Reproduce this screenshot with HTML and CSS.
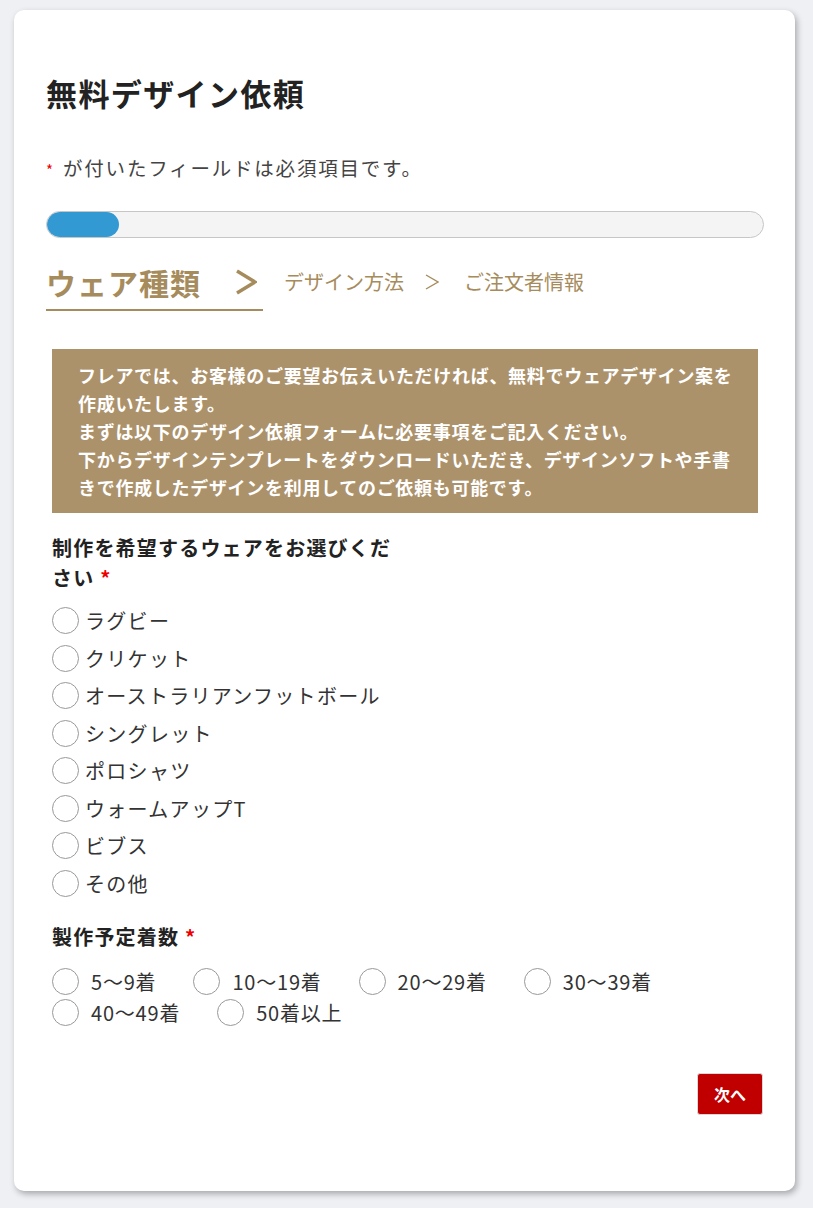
FILE: index.html
```html
<!DOCTYPE html>
<html lang="ja">
<head>
    <meta charset="UTF-8">
    <meta name="viewport" content="width=device-width, initial-scale=1.0">
    <title>無料デザイン依頼</title>
    <link rel="stylesheet" href="styles.css">
</head>
<body>
    <div class="card">
        <h1 class="title">無料デザイン依頼</h1>
        <p class="note"><span class="req">*</span> が付いたフィールドは必須項目です。</p>

        <div class="progress"><div class="bar" style="width:72px"></div></div>

        <div class="steps">
            <div class="step active">ウェア種類
                <svg class="arrow" width="22" height="26" viewBox="0 0 22 26"><polyline points="2,2 20,13 2,24" fill="none" stroke="currentColor" stroke-width="3.4"/></svg>
            </div>
            <div class="step">デザイン方法</div>
            <svg class="sep" width="14" height="16" viewBox="0 0 14 16"><polyline points="1,1 13,8 1,15" fill="none" stroke="currentColor" stroke-width="1.4"/></svg>
            <div class="step">ご注文者情報</div>
        </div>

        <form class="form">
            <div class="intro">
                フレアでは、お客様のご要望お伝えいただければ、無料でウェアデザイン案を<br>作成いたします。<br>
                まずは以下のデザイン依頼フォームに必要事項をご記入ください。<br>
                下からデザインテンプレートをダウンロードいただき、デザインソフトや手書<br>きで作成したデザインを利用してのご依頼も可能です。
            </div>

            <div class="field">
                <p class="label">制作を希望するウェアをお選びくだ<br>さい <span class="req">*</span></p>
                <div class="choices">
                    <label class="choice"><input type="radio" name="wear">ラグビー</label>
                    <label class="choice"><input type="radio" name="wear">クリケット</label>
                    <label class="choice"><input type="radio" name="wear">オーストラリアンフットボール</label>
                    <label class="choice"><input type="radio" name="wear">シングレット</label>
                    <label class="choice"><input type="radio" name="wear">ポロシャツ</label>
                    <label class="choice"><input type="radio" name="wear">ウォームアップT</label>
                    <label class="choice"><input type="radio" name="wear">ビブス</label>
                    <label class="choice"><input type="radio" name="wear">その他</label>
                </div>
            </div>

            <div class="field">
                <p class="label">製作予定着数 <span class="req">*</span></p>
                <div class="choices inline">
                    <label class="choice"><input type="radio" name="qty">5〜9着</label>
                    <label class="choice"><input type="radio" name="qty">10〜19着</label>
                    <label class="choice"><input type="radio" name="qty">20〜29着</label>
                    <label class="choice"><input type="radio" name="qty">30〜39着</label>
                    <label class="choice"><input type="radio" name="qty">40〜49着</label>
                    <label class="choice"><input type="radio" name="qty">50着以上</label>
                </div>
            </div>

            <div class="actions">
                <button type="button" class="next">次へ</button>
            </div>
        </form>
    </div>
</body>
</html>
```

FILE: styles.css
```css
*{
    margin:0;
    padding:0;
    box-sizing:border-box;
}
body{
    background:#eff0f4;
    font-family:"Noto Sans CJK JP","Noto Sans",sans-serif;
    color:#333;
    padding:10px 14px 17px;
}
.card{
    width:781px;
    height:1181px;
    background:#fff;
    border-radius:10px;
    box-shadow:2px 3px 6px rgba(0,0,0,.3);
    padding:61px 31px 0 32px;
}
.title{
    font-size:31px;
    line-height:44px;
    font-weight:700;
    letter-spacing:1.4px;
    color:#222;
}
.note{
    margin-top:38px;
    font-size:19.5px;
    line-height:30px;
    letter-spacing:1.8px;
    color:#444;
}
.req{
    color:#e00;
    font-weight:700;
}
.note .req{
    font-size:15px;
    font-weight:400;
    margin-right:2px;
}
.progress{
    margin-top:26px;
    height:27px;
    border:1px solid #c6c6c6;
    border-radius:14px;
    background:#f4f4f4;
    overflow:hidden;
}
.bar{
    height:100%;
    background:#3399d3;
    border-radius:14px;
}
.steps{
    margin-top:24px;
    display:flex;
    align-items:flex-start;
    color:#a68b5c;
}
.step{
    font-size:20px;
    line-height:40px;
}
.step.active{
    font-size:30px;
    font-weight:700;
    letter-spacing:1px;
    padding:0 6px 7px 0;
    border-bottom:2px solid #a68b5c;
    margin-right:21px;
    display:flex;
    align-items:center;
}
.arrow{
    margin-left:34px;
}
.sep{
    margin:12px 25px 0 21px;
}
.form{
    margin-top:38px;
    padding:0 6px;
}
.intro{
    background:#ac926b;
    color:#fff;
    font-weight:700;
    font-size:18px;
    line-height:28px;
    letter-spacing:.7px;
    padding:12px 10px 12px 26px;
    white-space:nowrap;
}
.field{
    margin-top:20px;
}
.label{
    font-size:20px;
    font-weight:700;
    line-height:30px;
    letter-spacing:1.2px;
    color:#222;
}
.choices{
    margin-top:9px;
    display:flex;
    flex-direction:column;
}
.choice{
    display:flex;
    align-items:center;
    font-size:20px;
    line-height:37.5px;
    letter-spacing:1.3px;
}
.choice input{
    appearance:none;
    width:27px;
    height:27px;
    border:1px solid #999;
    border-radius:50%;
    margin-right:6px;
    background:#fff;
}
.choices.inline{
    margin-top:14px;
    flex-direction:row;
    flex-wrap:wrap;
}
.inline .choice{
    font-size:20px;
    line-height:31px;
    letter-spacing:.8px;
    margin-right:37px;
}
.inline .choice input{
    margin-right:12px;
}
.actions{
    margin:45px -5px 0 0;
    display:flex;
    justify-content:flex-end;
}
.next{
    border:1px solid #d8d8d8;
    background:#c00000;
    color:#fff;
    font-family:inherit;
    font-weight:700;
    font-size:16px;
    width:66px;
    height:42px;
    border-radius:3px;
}
```
